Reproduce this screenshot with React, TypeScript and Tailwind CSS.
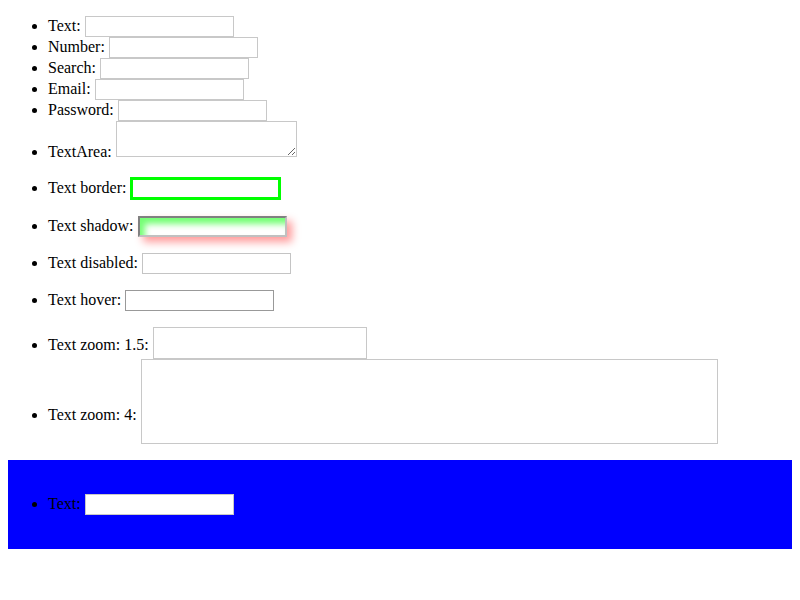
import type { ReactNode } from 'react'

// one list row: label, a space, then the control. The wrapper is an
// overflow-hidden inline-block, so its baseline is its bottom edge and
// `drop` puts that edge a few px under the text baseline.
function Row({ label, drop, box, children }: { label: string; drop: string; box: string; children: ReactNode }) {
  return (
    <li>
      {label}{' '}
      <span className={`inline-block overflow-hidden ${drop} ${box}`}>{children}</span>
    </li>
  )
}

const plain = 'w-[149px] h-[21px] border border-[#c8c8c8] bg-white'
const fill = 'block w-full h-full bg-transparent outline-none'

export default function App() {
  return (
    <div className="px-2 font-['Liberation_Serif',serif] text-[16px] leading-[normal] text-black">
      <ul className="list-disc pl-10 my-4">
        <Row label="Text:" drop="align-[-6px]" box={plain}>
          <input type="text" className={fill} />
        </Row>
        <Row label="Number:" drop="align-[-6px]" box={plain}>
          <input type="number" className={fill} />
        </Row>
        <Row label="Search:" drop="align-[-6px]" box={plain}>
          <input type="search" className={fill} />
        </Row>
        <Row label="Email:" drop="align-[-6px]" box={plain}>
          <input type="email" className={fill} />
        </Row>
        <Row label="Password:" drop="align-[-6px]" box={plain}>
          <input type="password" className={fill} />
        </Row>
        <Row label="TextArea:" drop="align-[0px]" box="w-[181px] h-[36px]">
          <textarea className="block w-full h-full border border-[#c8c8c8] bg-white" />
        </Row>
      </ul>

      <ul className="list-disc pl-10 my-4">
        <Row label="Text border:" drop="align-[-7px]" box="w-[151px] h-[23px] border-[3px] border-[#00ff00] bg-white">
          <input type="text" className={fill} />
        </Row>
      </ul>

      <ul className="list-disc pl-10 my-4">
        <Row
          label="Text shadow:"
          drop="align-[-6px]"
          box="w-[149px] h-[21px] border-2 border-t-[#808080] border-l-[#808080] border-b-[#c0c0c0] border-r-[#c0c0c0] bg-white shadow-[inset_5px_6px_6px_rgba(0,255,0,0.55),5px_5px_9px_rgba(255,0,0,0.4)]"
        >
          <input type="text" className={fill} />
        </Row>
      </ul>

      <ul className="list-disc pl-10 my-4">
        <Row label="Text disabled:" drop="align-[-6px]" box="w-[149px] h-[21px] border border-[#c4c4c4] bg-white">
          <input type="text" disabled className={fill} />
        </Row>
      </ul>

      <ul className="list-disc pl-10 my-4">
        <Row label="Text hover:" drop="align-[-6px]" box="w-[149px] h-[21px] border border-[#999999] bg-white">
          <input type="text" className={fill} />
        </Row>
      </ul>

      <ul className="list-disc pl-10 my-4">
        <Row label="Text zoom: 1.5:" drop="align-[-9px]" box="w-[214px] h-[32px] border border-[#c8c8c8] bg-white">
          <input type="text" className={fill} />
        </Row>
        <Row label="Text zoom: 4:" drop="align-[-24px]" box="w-[577px] h-[85px] border border-[#c8c8c8] bg-white">
          <input type="text" className={fill} />
        </Row>
      </ul>

      <div className="bg-[#0000ff] py-[34px]">
        <ul className="list-disc pl-10">
          <Row label="Text:" drop="align-[-6px]" box={plain}>
            <input type="text" className={fill} />
          </Row>
        </ul>
      </div>
    </div>
  )
}
